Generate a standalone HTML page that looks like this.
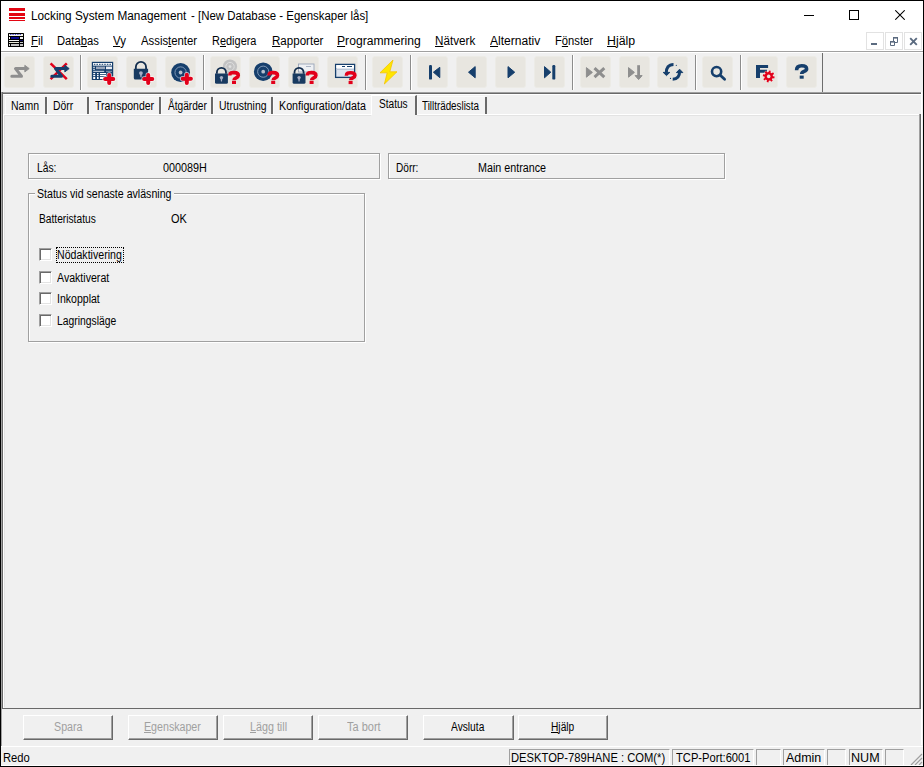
<!DOCTYPE html>
<html><head><meta charset="utf-8">
<style>
*{margin:0;padding:0;box-sizing:border-box}
html,body{width:924px;height:767px;overflow:hidden;background:#f0f0f0;font-family:"Liberation Sans",sans-serif;color:#000}
.a{position:absolute}
.tx{position:absolute;line-height:20px;white-space:nowrap;transform-origin:0 0}
.tx u{text-decoration:underline;text-underline-offset:1px;text-decoration-thickness:1px}
.tb{position:absolute;top:56px;width:31px;height:32px;background:#e8e6e0;border:1px solid #ecebe6;border-radius:3px}
.tb svg{position:absolute;left:0;top:0}
.sep{position:absolute;top:55px;width:1px;height:35px;background:#8c8c8c;box-shadow:1px 0 0 #fff}
.etch{position:absolute;border:1px solid #a0a0a0;box-shadow:1px 1px 0 #fff, inset 1px 1px 0 #fff}
.btn{position:absolute;top:715px;height:25px;background:#f0f0f0;border-top:1px solid #fff;border-left:1px solid #fff;border-right:1px solid #696969;border-bottom:1px solid #696969;box-shadow:inset -1px -1px 0 #a0a0a0}
.cb{position:absolute;left:39px;width:13px;height:13px;background:#fff;border-top:1px solid #a0a0a0;border-left:1px solid #a0a0a0;border-right:1px solid #fff;border-bottom:1px solid #fff;box-shadow:inset 1px 1px 0 #696969, inset -1px -1px 0 #e3e3e3}
.sp{position:absolute;top:749px;height:17px;border-top:1px solid #a0a0a0;border-left:1px solid #a0a0a0;border-right:1px solid #fff}
.tab{position:absolute;top:96px;height:18px;background:#f3f3f3;border-top:1px solid #fafafa;border-left:1px solid #fafafa}
.tsep{position:absolute;top:97px;width:2px;height:17px;background:#696969}
.mdib{position:absolute;top:32px;width:18px;height:18px;border:1px solid #e2e2e2}

.tx u.m{text-underline-offset:1px}

</style></head><body>
<!-- frame -->
<div class="a" style="left:0;top:0;width:924px;height:767px;border:1px solid #000;background:#f0f0f0"></div>
<!-- title + menu -->
<div class="a" style="left:1px;top:1px;width:922px;height:50px;background:#fff"></div>
<div class="a" style="left:9px;top:8px;width:16px;height:3px;background:#e30613"></div>
<div class="a" style="left:9px;top:13px;width:16px;height:3px;background:#e30613"></div>
<div class="a" style="left:9px;top:17px;width:16px;height:2px;background:#e30613"></div>
<div class="a" style="left:9px;top:20px;width:16px;height:1px;background:#e30613"></div>
<!-- window controls -->
<div class="a" style="left:804px;top:15px;width:10px;height:1px;background:#000"></div>
<div class="a" style="left:849px;top:10px;width:10px;height:10px;border:1px solid #000"></div>
<svg class="a" style="left:895px;top:10px" width="10" height="10" viewBox="0 0 10 10"><path d="M0.3 0.3L9.7 9.7M9.7 0.3L0.3 9.7" stroke="#000" stroke-width="1.05"/></svg>
<!-- menu icon -->
<svg class="a" style="left:8px;top:33px" width="16" height="14" viewBox="0 0 16 14">
<rect x="0" y="0" width="16" height="14" rx="0.6" fill="#000"/>
<rect x="1" y="1" width="14" height="2" fill="#f4f4e8"/>
<path d="M2,1.2 h1.4 v0.9 h-1.4z M4.4,1.2 h1.4 v0.9 h-1.4z M6.8,1.2 h1.4 v0.9 h-1.4z M9.2,1.2 h1.4 v0.9 h-1.4z M11.6,1.2 h1.4 v0.9 h-1.4z" fill="#1010c0"/>
<rect x="1" y="4" width="1" height="2" fill="#fff"/>
<rect x="3" y="4" width="8" height="2" fill="#0a0a90"/>
<rect x="12" y="4" width="3" height="2" fill="#f2f2f2"/>
<rect x="1" y="7" width="10" height="1" fill="#f0f0f0"/>
<rect x="12" y="7" width="3" height="1" fill="#101060"/>
<rect x="1" y="9" width="10" height="1" fill="#e8e8d8"/>
<rect x="12" y="9" width="3" height="1" fill="#c8c8c8"/>
<rect x="1" y="11" width="1" height="2" fill="#e0e0e0"/>
<rect x="3" y="11" width="8" height="2" fill="#c0c0c0"/>
<rect x="12" y="11" width="3" height="2" fill="#c0c0c0"/>
</svg>
<!-- MDI buttons -->
<div class="mdib" style="left:866px"></div>
<div class="mdib" style="left:885px"></div>
<div class="mdib" style="left:904px"></div>
<div class="a" style="left:871px;top:43px;width:6px;height:2px;background:#5b6b80"></div>
<svg class="a" style="left:889px;top:36px" width="10" height="10" viewBox="0 0 10 10"><path d="M4.5,5 V1.5 H8.5 V6.5 H6" fill="none" stroke="#5b6b80" stroke-width="1"/><rect x="4" y="1" width="5" height="1.6" fill="#5b6b80"/><path d="M1.5,5.5 H5.5 V9.5 H1.5 Z" fill="none" stroke="#5b6b80" stroke-width="1"/><rect x="1" y="5" width="5" height="1.6" fill="#5b6b80"/></svg>
<svg class="a" style="left:909px;top:37px" width="9" height="9" viewBox="0 0 9 9"><path d="M1.2,1.2 L7.8,7.8 M7.8,1.2 L1.2,7.8" stroke="#5b6b80" stroke-width="1.9"/></svg>

<div class="a" style="left:1px;top:51px;width:922px;height:1px;background:#a0a0a0"></div>
<div class="a" style="left:1px;top:52px;width:922px;height:1px;background:#fff"></div>
<!-- toolbar bottom -->
<div class="a" style="left:1px;top:92px;width:921px;height:1px;background:#a0a0a0"></div>
<div class="a" style="left:1px;top:93px;width:921px;height:1px;background:#696969"></div>
<div class="a" style="left:1px;top:94px;width:921px;height:1px;background:#fff"></div>

<!-- page border -->
<div class="a" style="left:1px;top:92px;width:1px;height:654px;background:#a0a0a0"></div>
<div class="a" style="left:2px;top:92px;width:1px;height:617px;background:#696969"></div>
<div class="a" style="left:3px;top:114px;width:368px;height:1px;background:#fff"></div>
<div class="a" style="left:417px;top:114px;width:503px;height:1px;background:#fff"></div>
<div class="a" style="left:3px;top:114px;width:1px;height:594px;background:#fff"></div>
<div class="a" style="left:919px;top:114px;width:1px;height:594px;background:#a0a0a0"></div>
<div class="a" style="left:920px;top:114px;width:1px;height:595px;background:#696969"></div>
<div class="a" style="left:3px;top:708px;width:918px;height:1px;background:#696969"></div>
<div class="a" style="left:921px;top:92px;width:1px;height:653px;background:#fff"></div>

<div class="a" style="left:4px;top:115px;width:367px;height:1px;background:#e3e3e3"></div>
<div class="a" style="left:417px;top:115px;width:502px;height:1px;background:#e3e3e3"></div>
<div class="a" style="left:4px;top:115px;width:1px;height:592px;background:#e3e3e3"></div>
<!-- content boxes -->
<div class="etch" style="left:28px;top:153px;width:352px;height:26px"></div>
<div class="etch" style="left:388px;top:153px;width:337px;height:26px"></div>
<div class="etch" style="left:28px;top:193px;width:337px;height:149px"></div>
<div class="a" style="left:35px;top:190px;width:139px;height:8px;background:#f0f0f0"></div>

<!-- checkboxes -->
<div class="cb" style="top:248px"></div>
<div class="cb" style="top:271px"></div>
<div class="cb" style="top:292px"></div>
<div class="cb" style="top:314px"></div>
<div class="a" style="left:56px;top:247px;width:68px;height:16px;border:1px dotted #000"></div>

<!-- buttons -->
<div class="btn" style="left:23px;width:90px"></div>
<div class="btn" style="left:128px;width:90px"></div>
<div class="btn" style="left:223px;width:90px"></div>
<div class="btn" style="left:318px;width:90px"></div>
<div class="btn" style="left:423px;width:91px"></div>
<div class="btn" style="left:518px;width:90px"></div>

<!-- status bar -->
<div class="a" style="left:1px;top:746px;width:922px;height:1px;background:#fff"></div>
<div class="sp" style="left:509px;width:161px"></div>
<div class="sp" style="left:672px;width:82px"></div>
<div class="sp" style="left:756px;width:25px"></div>
<div class="sp" style="left:783px;width:42px"></div>
<div class="sp" style="left:827px;width:19px"></div>
<div class="sp" style="left:849px;width:34px"></div>
<div class="sp" style="left:885px;width:19px"></div>
<svg class="a" style="left:910px;top:753px" width="13" height="13" viewBox="0 0 13 13"><path d="M12 1L1 12M12 5L5 12M12 9L9 12" stroke="#a0a0a0" stroke-width="1.2"/></svg>
<div class="a" style="left:1px;top:765px;width:922px;height:1px;background:#fff"></div>
<div class='tb' style='left:4px'></div>
<div class='tb' style='left:43px'></div>
<div class='tb' style='left:87px'></div>
<div class='tb' style='left:126px'></div>
<div class='tb' style='left:165px'></div>
<div class='tb' style='left:210px'></div>
<div class='tb' style='left:249px'></div>
<div class='tb' style='left:288px'></div>
<div class='tb' style='left:327px'></div>
<div class='tb' style='left:372px'></div>
<div class='tb' style='left:417px'></div>
<div class='tb' style='left:456px'></div>
<div class='tb' style='left:495px'></div>
<div class='tb' style='left:534px'></div>
<div class='tb' style='left:580px'></div>
<div class='tb' style='left:619px'></div>
<div class='tb' style='left:657px'></div>
<div class='tb' style='left:702px'></div>
<div class='tb' style='left:747px'></div>
<div class='tb' style='left:786px'></div>
<div class='sep' style='left:80px'></div>
<div class='sep' style='left:203px'></div>
<div class='sep' style='left:365px'></div>
<div class='sep' style='left:410px'></div>
<div class='sep' style='left:572px'></div>
<div class='sep' style='left:695px'></div>
<div class='sep' style='left:740px'></div>
<div class='a' style='left:822px;top:53px;width:1px;height:39px;background:#6d6d6d'></div>
<svg class='a' style='left:0;top:52px' width='924' height='40' viewBox='0 52 924 40'><path d='M11.8,76.2 H21.5 L15.5,68.6 H24.5' fill='none' stroke='#8e8e8e' stroke-width='3' stroke-linecap='round' stroke-linejoin='round'/><path d='M24.8,65.3 L29.2,68.6 L24.8,71.9 Z' fill='#8e8e8e' stroke='#8e8e8e' stroke-width='0.9' stroke-linejoin='round'/><path d='M50.6,63.4 L66.8,79.2 M66.8,63.4 L50.6,79.2' stroke='#e2001a' stroke-width='2.5'/><path d='M51.8,76.2 H61.5 L55.5,68.6 H64.5' fill='none' stroke='#163f6c' stroke-width='3' stroke-linecap='round' stroke-linejoin='round'/><path d='M64.8,65.3 L69.2,68.6 L64.8,71.9 Z' fill='#163f6c' stroke='#163f6c' stroke-width='0.9' stroke-linejoin='round'/><rect x='91.8' y='61.8' width='21.4' height='18.2' fill='#163f6c'/><rect x='93' y='63' width='19' height='2.6' fill='#fff'/><rect x='93.8' y='63.8' width='1.6' height='1' fill='#163f6c'/><rect x='96.39999999999999' y='63.8' width='1.6' height='1' fill='#163f6c'/><rect x='99.0' y='63.8' width='1.6' height='1' fill='#163f6c'/><rect x='101.6' y='63.8' width='1.6' height='1' fill='#163f6c'/><rect x='104.2' y='63.8' width='1.6' height='1' fill='#163f6c'/><rect x='106.8' y='63.8' width='1.6' height='1' fill='#163f6c'/><rect x='109.4' y='63.8' width='1.6' height='1' fill='#163f6c'/><rect x='93.2' y='66.8' width='1.6' height='1' fill='#fff'/><rect x='96' y='66.6' width='9' height='2.6' fill='#9aa6ba'/><rect x='106' y='66.6' width='6' height='2.6' fill='#e8ecf2'/><rect x='93.2' y='68.8' width='1.6' height='1' fill='#fff'/><rect x='93.2' y='70.8' width='11' height='1' fill='#dfe4ec'/><rect x='106' y='70.8' width='6' height='1' fill='#8c9ab0'/><rect x='93.2' y='73' width='2' height='1.2' fill='#fff'/><rect x='97' y='73' width='1.6' height='1.2' fill='#fff'/><rect x='100' y='73' width='6' height='1.2' fill='#fff'/><rect x='93.2' y='75' width='2' height='1.2' fill='#fff'/><rect x='97' y='75' width='1.6' height='1.2' fill='#fff'/><rect x='100' y='75' width='6' height='1.2' fill='#fff'/><rect x='93.2' y='77' width='2' height='2' fill='#fff'/><rect x='97' y='77' width='1.6' height='2' fill='#fff'/><rect x='100' y='77' width='5' height='2' fill='#fff'/><path d='M105.10000000000001,79 H113.3 M109.2,74.9 V83.1' stroke='#fff' stroke-width='5.4' stroke-linecap='round' opacity='.7'/><path d='M105.10000000000001,79 H113.3 M109.2,74.9 V83.1' stroke='#e2001a' stroke-width='4.0' stroke-linecap='round'/><path d='M135.85000000000002,69.1 V67.0 A5.1,5.1 0 0 1 146.05,67.0 V69.1' fill='none' stroke='#122d4d' stroke-width='1.8'/><path d='M133.8,68.8 H148.10000000000002 V78.0 Q148.10000000000002,79.5 146.60000000000002,79.5 H135.3 Q133.8,79.5 133.8,78.0 Z' fill='#183a60'/><circle cx='140.95000000000002' cy='73.08' r='1.8590000000000002' fill='#a9afc4'/><path d='M139.949,73.615 L140.37800000000001,77.146 H141.52200000000002 L141.95100000000002,73.615 Z' fill='#a9afc4'/><path d='M144.1,79 H152.29999999999998 M148.2,74.9 V83.1' stroke='#fff' stroke-width='5.4' stroke-linecap='round' opacity='.7'/><path d='M144.1,79 H152.29999999999998 M148.2,74.9 V83.1' stroke='#e2001a' stroke-width='4.0' stroke-linecap='round'/><circle cx='180.6' cy='72.5' r='9.4' fill='#163f6c'/><circle cx='180.6' cy='72.5' r='5.64' fill='none' stroke='#8aa0bd' stroke-width='0.9'/><circle cx='180.6' cy='72.5' r='1.8800000000000001' fill='#b7c1cf'/><path d='M182.70000000000002,78.8 H190.9 M186.8,74.7 V82.89999999999999' stroke='#fff' stroke-width='5.4' stroke-linecap='round' opacity='.7'/><path d='M182.70000000000002,78.8 H190.9 M186.8,74.7 V82.89999999999999' stroke='#e2001a' stroke-width='4.0' stroke-linecap='round'/><circle cx='230' cy='66.6' r='7.1' fill='#c3c3c3'/><circle cx='230' cy='66.6' r='4.2' fill='none' stroke='#dedede' stroke-width='1'/><circle cx='230' cy='66.6' r='1.4' fill='#e2e2e2'/><path d='M216.9,73.8 V72.35000000000001 A4.55,4.55 0 0 1 225.99999999999997,72.35000000000001 V73.8' fill='none' stroke='#122d4d' stroke-width='1.8'/><path d='M215,73.5 H227.9 V82.2 Q227.9,83.7 226.4,83.7 H216.5 Q215,83.7 215,82.2 Z' fill='#183a60'/><circle cx='221.45' cy='77.58' r='1.677' fill='#a9afc4'/><path d='M220.547,78.09 L220.934,81.456 H221.96599999999998 L222.35299999999998,78.09 Z' fill='#a9afc4'/><path d='M229.8,75.6 C229.8,72.5 232.0,72.6 234.2,72.6 C237.0,72.6 238.3,74.0 238.3,75.4 C238.3,78.0 234.0,77.6 234.0,80.2' fill='none' stroke='#e2001a' stroke-width='3.6'/><rect x='232.0' y='80.9' width='4.0' height='3.1' fill='#e2001a'/><circle cx='263.2' cy='71.7' r='9.3' fill='#163f6c'/><circle cx='263.2' cy='71.7' r='5.58' fill='none' stroke='#8aa0bd' stroke-width='0.9'/><circle cx='263.2' cy='71.7' r='1.8600000000000003' fill='#b7c1cf'/><path d='M269.0,75.6 C269.0,72.5 271.2,72.6 273.4,72.6 C276.2,72.6 277.5,74.0 277.5,75.4 C277.5,78.0 273.2,77.6 273.2,80.2' fill='none' stroke='#e2001a' stroke-width='3.6'/><rect x='271.2' y='80.9' width='4.0' height='3.1' fill='#e2001a'/><rect x='298.5' y='64' width='15.5' height='8' fill='#eef0f3' stroke='#9aa5b8' stroke-width='0.9'/><rect x='306' y='66' width='5' height='0.8' fill='#9aa5b8'/><path d='M294.5,73.8 V72.35000000000001 A4.55,4.55 0 0 1 303.6,72.35000000000001 V73.8' fill='none' stroke='#122d4d' stroke-width='1.8'/><path d='M292.6,73.5 H305.5 V82.2 Q305.5,83.7 304.0,83.7 H294.1 Q292.6,83.7 292.6,82.2 Z' fill='#183a60'/><circle cx='299.05' cy='77.58' r='1.677' fill='#a9afc4'/><path d='M298.147,78.09 L298.534,81.456 H299.56600000000003 L299.95300000000003,78.09 Z' fill='#a9afc4'/><path d='M307.40000000000003,75.6 C307.40000000000003,72.5 309.6,72.6 311.8,72.6 C314.6,72.6 315.90000000000003,74.0 315.90000000000003,75.4 C315.90000000000003,78.0 311.6,77.6 311.6,80.2' fill='none' stroke='#e2001a' stroke-width='3.6'/><rect x='309.6' y='80.9' width='4.0' height='3.1' fill='#e2001a'/><rect x='335.6' y='64.4' width='19' height='13' fill='#dde4ee' stroke='#163f6c' stroke-width='1.3'/><rect x='336.3' y='65.1' width='17.6' height='3' fill='#fff'/><rect x='342' y='66' width='3' height='1' fill='#163f6c'/><rect x='347' y='66' width='5' height='1' fill='#163f6c'/><rect x='336.3' y='69' width='17.6' height='1' fill='#bcc8d8'/><path d='M346.40000000000003,75.69999999999999 C346.40000000000003,72.6 348.6,72.69999999999999 350.8,72.69999999999999 C353.6,72.69999999999999 354.90000000000003,74.1 354.90000000000003,75.5 C354.90000000000003,78.1 350.6,77.69999999999999 350.6,80.3' fill='none' stroke='#e2001a' stroke-width='3.6'/><rect x='348.6' y='81.0' width='4.0' height='3.1' fill='#e2001a'/><path d='M393,60 L380,72.8 L387.2,72.8 L384.4,84 L397,71.8 L389.8,71.8 Z' fill='#ffe600' stroke='#f5c400' stroke-width='0.8' stroke-linejoin='round'/><rect x='429' y='65' width='3' height='14.6' rx='1.2' fill='#163f6c'/><path d='M433.4,72.2 L439.8,67.3 L439.8,77.7 Z' fill='#163f6c' stroke='#163f6c' stroke-width='1' stroke-linejoin='round'/><path d='M468.5,72.2 L475.2,66.6 L475.2,77.8 Z' fill='#163f6c' stroke='#163f6c' stroke-width='1' stroke-linejoin='round'/><path d='M508,66.6 L514.7,72.2 L508,77.8 Z' fill='#163f6c' stroke='#163f6c' stroke-width='1' stroke-linejoin='round'/><path d='M544.5,66.6 L550.8,72.2 L544.5,77.8 Z' fill='#163f6c' stroke='#163f6c' stroke-width='1' stroke-linejoin='round'/><rect x='552.3' y='65' width='3' height='14.6' rx='1.2' fill='#163f6c'/><path d='M586.4,67.6 L592.4,72.4 L586.4,77.2 Z' fill='#8e8e8e' stroke='#8e8e8e' stroke-width='1' stroke-linejoin='round'/><path d='M594.5,68.2 L604.3,77.2 M604.3,68.2 L594.5,77.2' stroke='#8e8e8e' stroke-width='3'/><path d='M628.5,67.6 L634.4,72.4 L628.5,77.2 Z' fill='#8e8e8e' stroke='#8e8e8e' stroke-width='1' stroke-linejoin='round'/><rect x='637.2' y='65.2' width='2.8' height='11.3' fill='#8e8e8e'/><path d='M635.1,75.6 L642.1,75.6 L638.6,79.6 Z' fill='#8e8e8e' stroke='#8e8e8e' stroke-width='1' stroke-linejoin='round'/><path d='M673.5,64.4 C668.5,64.4 666.2,68 666.3,72.8' fill='none' stroke='#163f6c' stroke-width='3'/><path d='M663.2,72.4 L669.8,72.4 L666.5,75.6 Z' fill='#163f6c' stroke='#163f6c' stroke-width='1' stroke-linejoin='round'/><path d='M672.7,79.2 C677.5,79.2 679.7,76 679.6,71.5' fill='none' stroke='#163f6c' stroke-width='3'/><path d='M676.4,72.6 L682.8,72.6 L679.6,69.2 Z' fill='#163f6c' stroke='#163f6c' stroke-width='1' stroke-linejoin='round'/><circle cx='676.3' cy='65.3' r='0.6' fill='#163f6c'/><circle cx='670.5' cy='78.4' r='0.6' fill='#163f6c'/><circle cx='716.6' cy='71.6' r='4.6' fill='none' stroke='#163f6c' stroke-width='2.6'/><path d='M720,75 L724.6,79.3' stroke='#163f6c' stroke-width='2.8' stroke-linecap='round'/><path d='M756,65 H768.1 V68.1 H760 V69.8 H767 V72.7 H760 V77.9 H756 Z' fill='#163f6c'/><path d='M774.70,76.62 L774.32,78.49 L772.61,78.19 L771.85,79.33 L772.79,80.79 L771.20,81.86 L770.20,80.43 L768.86,80.70 L768.48,82.40 L766.61,82.02 L766.91,80.31 L765.77,79.55 L764.31,80.49 L763.24,78.90 L764.67,77.90 L764.40,76.56 L762.70,76.18 L763.08,74.31 L764.79,74.61 L765.55,73.47 L764.61,72.01 L766.20,70.94 L767.20,72.37 L768.54,72.10 L768.92,70.40 L770.79,70.78 L770.49,72.49 L771.63,73.25 L773.09,72.31 L774.16,73.90 L772.73,74.90 L773.00,76.24 Z' fill='#e2001a' stroke='#fff' stroke-width='0.6' paint-order='stroke'/><circle cx='768.7' cy='76.4' r='1.8' fill='#e8e6e0'/><path d='M796.6,70.2 C796.6,66.8 799,65.8 801.7,65.8 C805,65.8 806.6,67.3 806.6,68.9 C806.6,71.6 801.7,71.2 801.7,73.9' fill='none' stroke='#163f6c' stroke-width='3.6'/><rect x='799.7' y='75.6' width='4' height='3.1' fill='#163f6c'/></svg><!-- tabs -->
<div class="tab" style="left:5px;width:40px"></div><div class="tsep" style="left:45px"></div>
<div class="tab" style="left:47px;width:40px"></div><div class="tsep" style="left:87px"></div>
<div class="tab" style="left:89px;width:70px"></div><div class="tsep" style="left:159px"></div>
<div class="tab" style="left:161px;width:50px"></div><div class="tsep" style="left:211px"></div>
<div class="tab" style="left:213px;width:58px"></div><div class="tsep" style="left:271px"></div>
<div class="tab" style="left:273px;width:98px"></div>
<div class="tab" style="left:417px;width:68px"></div><div class="tsep" style="left:485px"></div>
<div class="a" style="left:371px;top:95px;width:46px;height:20px;background:#f0f0f0;border-left:1px solid #fff;border-top:1px solid #fff;border-right:2px solid #696969"></div>

<div class='tx' style='left:30.52px;top:6px;font-size:12px;color:#000;transform:scaleX(0.9822)'>Locking System Management</div>
<div class='tx' style='left:190.75px;top:6px;font-size:12px;color:#000;transform:scaleX(0.9527)'>- [New Database - Egenskaper lås]</div>
<div class='tx' style='left:31.05px;top:31px;font-size:12px;color:#000;transform:scaleX(0.9455)'><u class='m'>F</u>il</div>
<div class='tx' style='left:57.37px;top:31px;font-size:12px;color:#000;transform:scaleX(0.9349)'>Data<u class='m'>b</u>as</div>
<div class='tx' style='left:113.30px;top:31px;font-size:12px;color:#000;transform:scaleX(0.9538)'><u class='m'>V</u>y</div>
<div class='tx' style='left:141.10px;top:31px;font-size:12px;color:#000;transform:scaleX(0.9441)'>Assis<u class='m'>t</u>enter</div>
<div class='tx' style='left:211.59px;top:31px;font-size:12px;color:#000;transform:scaleX(0.9125)'>R<u class='m'>e</u>digera</div>
<div class='tx' style='left:271.54px;top:31px;font-size:12px;color:#000;transform:scaleX(0.9635)'><u class='m'>R</u>apporter</div>
<div class='tx' style='left:337.29px;top:31px;font-size:12px;color:#000;transform:scaleX(1.0111)'><u class='m'>P</u>rogrammering</div>
<div class='tx' style='left:435.33px;top:31px;font-size:12px;color:#000;transform:scaleX(0.9725)'><u class='m'>N</u>ätverk</div>
<div class='tx' style='left:490.40px;top:31px;font-size:12px;color:#000;transform:scaleX(1.0060)'><u class='m'>A</u>lternativ</div>
<div class='tx' style='left:555.07px;top:31px;font-size:12px;color:#000;transform:scaleX(0.9325)'>F<u class='m'>ö</u>nster</div>
<div class='tx' style='left:607.37px;top:31px;font-size:12px;color:#000;transform:scaleX(1.0269)'><u class='m'>H</u>jälp</div>
<div class='tx' style='left:11.13px;top:96px;font-size:12px;color:#000;transform:scaleX(0.8733)'>Namn</div>
<div class='tx' style='left:52.84px;top:96px;font-size:12px;color:#000;transform:scaleX(0.8636)'>Dörr</div>
<div class='tx' style='left:94.90px;top:96px;font-size:12px;color:#000;transform:scaleX(0.8746)'>Transponder</div>
<div class='tx' style='left:167.80px;top:96px;font-size:12px;color:#000;transform:scaleX(0.8435)'>Åtgärder</div>
<div class='tx' style='left:219.03px;top:96px;font-size:12px;color:#000;transform:scaleX(0.8679)'>Utrustning</div>
<div class='tx' style='left:279.01px;top:96px;font-size:12px;color:#000;transform:scaleX(0.8917)'>Konfiguration/data</div>
<div class='tx' style='left:379.46px;top:94px;font-size:12px;color:#000;transform:scaleX(0.8424)'>Status</div>
<div class='tx' style='left:422.10px;top:96px;font-size:12px;color:#000;transform:scaleX(0.8186)'>Tillträdeslista</div>
<div class='tx' style='left:37.14px;top:158px;font-size:12px;color:#000;transform:scaleX(0.8571)'>Lås:</div>
<div class='tx' style='left:162.80px;top:158px;font-size:12px;color:#000;transform:scaleX(0.9000)'>000089H</div>
<div class='tx' style='left:396.26px;top:158px;font-size:12px;color:#000;transform:scaleX(0.8400)'>Dörr:</div>
<div class='tx' style='left:478.11px;top:158px;font-size:12px;color:#000;transform:scaleX(0.8946)'>Main entrance</div>
<div class='tx' style='left:37.12px;top:184px;font-size:12px;color:#000;transform:scaleX(0.8840)'>Status vid senaste avläsning</div>
<div class='tx' style='left:39.45px;top:209px;font-size:12px;color:#000;transform:scaleX(0.8508)'>Batteristatus</div>
<div class='tx' style='left:171.49px;top:209px;font-size:12px;color:#000;transform:scaleX(0.9125)'>OK</div>
<div class='tx' style='left:56.52px;top:245px;font-size:12px;color:#000;transform:scaleX(0.8833)'>Nödaktivering</div>
<div class='tx' style='left:56.80px;top:268px;font-size:12px;color:#000;transform:scaleX(0.8831)'>Avaktiverat</div>
<div class='tx' style='left:56.52px;top:289px;font-size:12px;color:#000;transform:scaleX(0.8787)'>Inkopplat</div>
<div class='tx' style='left:56.54px;top:311px;font-size:12px;color:#000;transform:scaleX(0.8612)'>Lagringsläge</div>
<div class='tx' style='left:54.01px;top:717px;font-size:12px;color:#a0a0a0;transform:scaleX(0.8903)'>Spara</div>
<div class='tx' style='left:144.31px;top:717px;font-size:12px;color:#a0a0a0;transform:scaleX(0.8873)'><u>E</u>genskaper</div>
<div class='tx' style='left:249.70px;top:717px;font-size:12px;color:#a0a0a0;transform:scaleX(0.8950)'><u>L</u>ägg till</div>
<div class='tx' style='left:347.30px;top:717px;font-size:12px;color:#a0a0a0;transform:scaleX(0.9167)'>Ta bort</div>
<div class='tx' style='left:451.00px;top:717px;font-size:12px;color:#000;transform:scaleX(0.8513)'>Avsluta</div>
<div class='tx' style='left:550.85px;top:717px;font-size:12px;color:#000;transform:scaleX(0.8500)'><u>H</u>jälp</div>
<div class='tx' style='left:3.47px;top:748px;font-size:12px;color:#000;transform:scaleX(0.9333)'>Redo</div>
<div class='tx' style='left:511.17px;top:748px;font-size:12px;color:#000;transform:scaleX(0.9335)'>DESKTOP-789HANE : COM(*)</div>
<div class='tx' style='left:675.60px;top:748px;font-size:12px;color:#000;transform:scaleX(0.9304)'>TCP-Port:6001</div>
<div class='tx' style='left:786.00px;top:748px;font-size:12px;color:#000;transform:scaleX(1.0364)'>Admin</div>
<div class='tx' style='left:851.15px;top:748px;font-size:12px;color:#000;transform:scaleX(1.0480)'>NUM</div>
</body></html>
